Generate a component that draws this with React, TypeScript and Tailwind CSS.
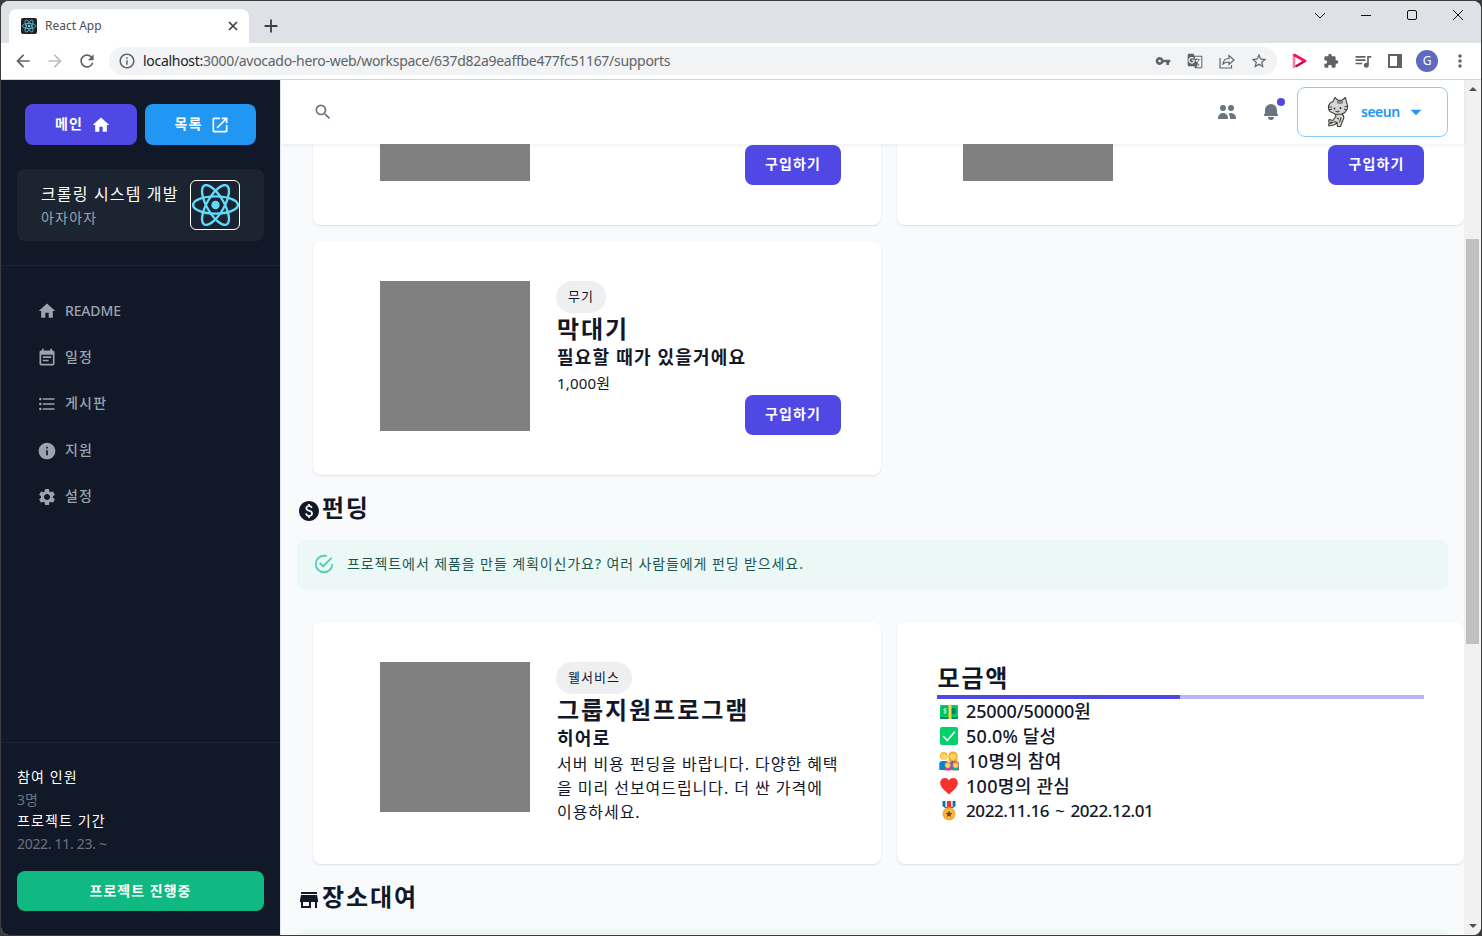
import React from "react";
import { MdHome, MdOpenInNew, MdEventNote, MdFormatListBulleted, MdInfo, MdSettings, MdSearch, MdArrowDropDown, MdPaid, MdStore, MdVpnKey, MdGTranslate, MdStarBorder, MdExtension, MdQueueMusic, MdArrowBack, MdArrowForward, MdRefresh, MdInfoOutline, MdAdd, MdMoreVert } from "react-icons/md";
import { HiUsers, HiBell } from "react-icons/hi";

function ReactLogo({ className }: { className: string }) {
  return (
    <svg viewBox="-11.5 -10.3 23 20.6" className={className}>
      <circle r="2.05" fill="#61dafb" />
      <g fill="none" stroke="#61dafb" strokeWidth="1.15">
        <ellipse rx="11" ry="4.2" />
        <ellipse rx="11" ry="4.2" transform="rotate(60)" />
        <ellipse rx="11" ry="4.2" transform="rotate(120)" />
      </g>
    </svg>
  );
}

function Cat() {
  return (
    <svg viewBox="0 0 22 32" className="h-8 w-[22px]" fill="none" stroke="#3f3f3a" strokeWidth="1.1" strokeLinejoin="round">
      <path d="M8 18 L3 15.500 Q1 13 1.500 10 Q2.500 6.500 6 5.500 L8 1.500 L11 4.300 L15 4.300 L18.500 1.500 L19.500 6.500 Q21.500 10 20 13.500 Q18.500 17 15 18 Q18 20.500 16 24 L13.500 30.500 L10.500 30.500 L10 27 L7 29 L2 30 L1.500 28 L6 26.500 L1.500 26 L2 23.500 L6 24.500 L9 20Z" fill="#d6d6d6" />
      <path d="M11 4.500v3M13 4.500v3.500M15 5v2.500M1.500 11h3.500M2 14l3-1M20.500 10.500h-3M20 14l-3-1M8.500 15l2 1 2-1M8 18.500l8-.5M10 22l2 1M7 25.500l4 1.500M14 21.500l-1.500 5" />
      <path d="M7.500 11.500v2M13.500 11v2" strokeWidth="1.600" />
    </svg>
  );
}

function Emoji({ kind }: { kind: string }) {
  return (
    <svg viewBox="0 0 20 20" className="h-5 w-5 shrink-0 overflow-visible">
      {kind === "money" && (
        <g>
          <rect x="1" y="13" width="18" height="5" rx="1" fill="#008463" />
          <rect x="1" y="4" width="18" height="12" rx="1" fill="#00d26a" />
          <rect x="2.500" y="5.500" width="15" height="9" fill="#00a56a" opacity=".5" />
          <circle cx="14" cy="10" r="3" fill="#008463" />
          <path d="M7.500 8H5V10H7V12H4.500M6 7v6" stroke="#a6f5cb" strokeWidth=".9" fill="none" />
          <rect x="9.500" y="4" width="3" height="14" fill="#fcd53f" />
        </g>
      )}
      {kind === "check" && (
        <g>
          <rect x="1" y="1" width="18" height="18" rx="2" fill="#00d26a" />
          <path d="M4.500 10.500L8.300 14.500L15.500 6" fill="none" stroke="#fff" strokeWidth="1.600" strokeLinecap="round" />
        </g>
      )}
      {kind === "family" && (
        <g>
          <path d="M.3 19v-6q0-3 3-3h4q2 0 2 3v6z" fill="#0084ce" />
          <path d="M10 19v-6q0-3 3-3h3q4 0 4 3v6z" fill="#8b5cc0" />
          <path d="M9.500 10V5q0-4.500 4.500-4.500T18.500 5v5z" fill="#f3ad35" />
          <circle cx="4.800" cy="5" r="4" fill="#f9b93c" />
          <circle cx="4.800" cy="6" r="3" fill="#ffd766" />
          <circle cx="14" cy="5.800" r="3" fill="#ffd766" />
          <path d="M5.500 19.500q0-3 3.200-3t3.200 3z" fill="#e0407f" />
          <path d="M13.500 19.500q0-3 3.200-3t3.300 3z" fill="#1bb060" />
          <circle cx="8.700" cy="14" r="3" fill="#f3a52b" />
          <circle cx="16.700" cy="14" r="3" fill="#f3a52b" />
          <circle cx="8.700" cy="14.700" r="2.100" fill="#ffd766" />
          <circle cx="16.700" cy="14.700" r="2.100" fill="#ffd766" />
        </g>
      )}
      {kind === "heart" && <path d="M10 18.500C5 14 1.200 11 1.200 6.800 1.200 1.500 7.500.5 10 4.500 12.500.5 18.800 1.500 18.800 6.800 18.800 11 15 14 10 18.500Z" fill="#f8312f" />}
      {kind === "medal" && (
        <g>
          <path d="M3.500 0h13v5l-4 3H7.500L3.500 5z" fill="#0074ba" />
          <path d="M8 0h4v7H8z" fill="#f8312f" />
          <path d="M6.300 0h1.700v6H6.300zM12 0h1.700v6H12z" fill="#e6e6e6" />
          <circle cx="10" cy="12.800" r="6.500" fill="#f9a92b" />
          <circle cx="10" cy="12.800" r="4.800" fill="#fbb943" />
          <path d="M10 9.500l1 2.300 2.500.2-1.900 1.600.6 2.400-2.200-1.300L7.800 16l.6-2.400L6.500 12l2.500-.2z" fill="#6d4534" />
        </g>
      )}
    </svg>
  );
}

function BuyButton() {
  return <button className="flex h-10 w-24 items-center justify-center self-end rounded-lg bg-[#5048e5] pb-[3px] pl-px text-[14px] font-semibold tracking-[1.1px] text-white">구입하기</button>;
}

function Card({ children, className = "" }: { children?: React.ReactNode; className?: string }) {
  return <div className={"w-[567.5px] shrink-0 rounded-lg bg-white p-10 shadow-[0_1px_2px_rgba(100,116,139,0.2)] " + className}>{children}</div>;
}

function Picture() {
  return (
    <div className="flex w-[203px] shrink-0 justify-center">
      <div className="h-[150px] w-[150px] bg-[#808080]" />
    </div>
  );
}

function Chip({ children }: { children: React.ReactNode }) {
  return <span className="flex h-8 items-center self-start rounded-full bg-[#eeeff1] px-3 text-[13px] tracking-[1px]">{children}</span>;
}

function Alert({ children }: { children?: React.ReactNode }) {
  return (
    <div className="flex h-[50px] w-[1151px] shrink-0 items-center rounded-lg bg-[#ebf8f5] px-4 pb-[3px] text-[14px] tracking-[0.9px] text-[#1d5650]">
      <svg viewBox="0 0 24 24" className="mr-3 h-[22px] w-[22px]" fill="#52cdb6">
        <path d="M20,12A8,8 0 0,1 12,20A8,8 0 0,1 4,12A8,8 0 0,1 12,4C12.76,4 13.5,4.11 14.2,4.31L15.77,2.74C14.61,2.26 13.34,2 12,2A10,10 0 0,0 2,12A10,10 0 0,0 12,22A10,10 0 0,0 22,12M7.91,10.08L6.5,11.5L11,16L21,6L19.59,4.58L11,13.17L7.91,10.08Z" />
      </svg>
      {children}
    </div>
  );
}

function BrowserChrome() {
  return (
    <>
      <div className="flex h-[42px] shrink-0 items-start bg-[#dee1e6] pl-2">
        <div className="mt-2 flex h-[34px] w-[240px] items-center rounded-t-lg bg-white pr-2 pl-3">
          <div className="flex h-4 w-4 items-center justify-center rounded-xs bg-[#222]">
            <ReactLogo className="h-[14px] w-[14px]" />
          </div>
          <span className="ml-2 flex-1 text-[12px] text-[#4c5054]">React App</span>
          <svg viewBox="0 0 16 16" className="h-4 w-4" stroke="#3c4043" strokeWidth="1.700">
            <path d="M4 4l8 8M12 4l-8 8" />
          </svg>
        </div>
        <MdAdd className="mt-[14px] ml-[11px] h-[22px] w-[22px] text-[#3c4043]" />
        <svg viewBox="0 0 162 29" className="mr-[5px] ml-auto h-[29px] w-[162px]" fill="none" stroke="#111" strokeWidth="1">
          <path d="M1 12l5 5 5-5M47 14.500h10" />
          <rect x="93.500" y="9.500" width="9" height="9" rx="1.500" />
          <path d="M139 9l10 10M149 9l-10 10" />
        </svg>
      </div>
      <div className="flex h-[37px] shrink-0 items-center border-b border-[#d5d7da] bg-white text-[#5f6368]">
        <MdArrowBack className="ml-3 h-5 w-5" />
        <MdArrowForward className="ml-3 h-5 w-5 text-[#bbbdc0]" />
        <MdRefresh className="ml-3 h-5 w-5" />
        <div className="ml-3 flex h-7 w-[1168px] items-center rounded-full bg-[#f1f3f4] pr-[10px] pl-[9px]">
          <MdInfoOutline className="h-[18px] w-[18px]" />
          <span className="ml-[7px] flex-1 pb-0.5 text-[14px] tracking-[-0.29px]">
            <span className="text-[#202124]">localhost:</span>3000/avocado-hero-web/workspace/637d82a9eaffbe477fc51167/supports
          </span>
          <div className="flex items-center gap-4">
            <MdVpnKey className="h-4 w-4" />
            <MdGTranslate className="h-4 w-4" />
            <svg viewBox="0 0 16 16" className="h-4 w-4" fill="none" stroke="#5f6368" strokeWidth="1.200">
              <path d="M1 5v10h11.500v-3M4 11q.5-5.500 6-5.500V2.500l5 4.500-5 4.500V9q-4 0-6 2z" />
            </svg>
            <MdStarBorder className="-mx-px h-[18px] w-[18px]" />
          </div>
        </div>
        <svg viewBox="0 0 16 16" className="ml-[14px] h-4 w-4" fill="none" strokeWidth="2.600" strokeLinejoin="round" strokeLinecap="round">
          <path d="M3 14V2" stroke="#fa7ba5" />
          <path d="M14 8L5.500 13" stroke="#c8005c" />
          <path d="M3.500 2L14 8" stroke="#fb0f64" />
        </svg>
        <MdExtension className="ml-4 h-4 w-4" />
        <MdQueueMusic className="ml-[14px] h-5 w-5" />
        <div className="ml-[15px] h-[14px] w-[14px] border-2 border-r-[5px] border-[#5f6368]" />
        <div className="ml-[14px] flex h-[22px] w-[22px] items-center justify-center rounded-full bg-[#5c6bc0] text-[12px] text-white">G</div>
        <MdMoreVert className="ml-3 h-5 w-5" />
      </div>
    </>
  );
}

const nav = [
  { label: "README", Icon: MdHome, tracking: "pb-0.5 tracking-[-0.15px]" },
  { label: "일정", Icon: MdEventNote, tracking: "pb-[3px] tracking-[1.2px]" },
  { label: "게시판", Icon: MdFormatListBulleted, tracking: "pb-[3px] tracking-[1.2px]" },
  { label: "지원", Icon: MdInfo, tracking: "pb-[3px] tracking-[1.2px]" },
  { label: "설정", Icon: MdSettings, tracking: "pb-[3px] tracking-[1.2px]" },
];

function Sidebar() {
  return (
    <aside className="flex w-[279px] shrink-0 flex-col bg-[#111827]">
      <div className="flex gap-2 px-6 pt-6 text-[14px] font-semibold tracking-[1px] text-white">
        <div className="flex h-[41px] w-28 items-center justify-center gap-2 rounded-lg bg-[#5048e5] pl-1">
          <span className="pb-0.5">메인</span>
          <MdHome className="h-5 w-5" />
        </div>
        <div className="flex h-[41px] w-[111px] items-center justify-center gap-2 rounded-lg bg-[#2196f3] pl-1">
          <span className="pb-0.5">목록</span>
          <MdOpenInNew className="h-5 w-5" />
        </div>
      </div>
      <div className="mx-4 mt-6 flex h-[72px] items-center justify-between rounded-lg bg-[#1c2431] pr-6 pl-6">
        <div className="flex flex-col pt-0.5">
          <span className="h-6 text-[16px] leading-6 tracking-[1.15px] text-white">크롤링 시스템 개발</span>
          <span className="h-6 text-[14px] leading-6 tracking-[1.2px] text-[#9ca3af]">아자아자</span>
        </div>
        <div className="flex h-[50px] w-[50px] shrink-0 items-center justify-center rounded-md border border-white">
          <ReactLogo className="h-[42px] w-[47px]" />
        </div>
      </div>
      <div className="mt-6 h-px bg-[#1b2433]" />
      <nav className="mt-[22px] flex flex-1 flex-col px-9">
        {nav.map(({ label, Icon, tracking }) => (
          <div key={label} className="flex h-[46.5px] items-center gap-2 text-[14px] font-medium text-[#9ca3af]">
            <Icon className="h-5 w-5" />
            <span className={tracking}>{label}</span>
          </div>
        ))}
      </nav>
      <div className="flex h-[193px] flex-col border-t border-[#1b2433] px-4 pt-[23px] text-[14px] leading-[22px]">
        <span className="tracking-[1.1px] text-white">참여 인원</span>
        <span className="pt-px leading-[21px] text-[#6b7280]">3명</span>
        <span className="tracking-[1.1px] text-white">프로젝트 기간</span>
        <span className="pt-px leading-[21px] tracking-[-0.3px] text-[#6b7280]">2022. 11. 23. ~</span>
        <div className="mt-[17px] flex h-10 items-center justify-center rounded-lg bg-[#10b981] pb-px font-semibold tracking-[1px] text-white">프로젝트 진행중</div>
      </div>
    </aside>
  );
}

function Header() {
  return (
    <header className="z-10 flex h-16 shrink-0 items-center bg-white pr-4 pl-8 text-[#6b7280] shadow-[0_1px_4px_rgba(100,116,139,0.12)]">
      <MdSearch className="h-5 w-5" />
      <HiUsers className="ml-auto h-5 w-5" />
      <div className="relative mr-4 ml-6">
        <HiBell className="h-5 w-5" />
        <span className="absolute -top-1 -right-1 h-2 w-2 rounded-full bg-[#5048e5]" />
      </div>
      <div className="flex h-[50px] w-[151px] items-center rounded-lg border border-[#90caf9] pl-[29px] text-[14px] font-semibold text-[#2196f3]">
        <Cat />
        <span className="ml-3 pb-px tracking-[-0.5px]">seeun</span>
        <MdArrowDropDown className="ml-[3px] h-[26px] w-[26px]" />
      </div>
    </header>
  );
}

const stats = [
  { kind: "money", text: "25000/50000원", tracking: "tracking-[-0.15px]" },
  { kind: "check", text: "50.0% 달성", tracking: "tracking-[0.15px]" },
  { kind: "family", text: "10명의 참여", tracking: "pl-px tracking-[0.45px]" },
  { kind: "heart", text: "100명의 관심", tracking: "tracking-[0.3px]" },
  { kind: "medal", text: "2022.11.16 ~ 2022.12.01", tracking: "text-[17px] tracking-[-0.4px] [word-spacing:2px]" },
];

function Content() {
  return (
    <main className="flex min-h-0 flex-1 flex-col overflow-hidden pl-4 text-[#121828]">
      <div className="flex shrink-0 gap-4 pl-4">
        {[0, 1].map((i) => (
          <div key={i} className="flex h-[81px] w-[567.5px] shrink-0 justify-between rounded-b-lg bg-white px-10 shadow-[0_1px_2px_rgba(100,116,139,0.2)]">
            <div className="flex w-[203px] justify-center">
              <div className="h-[37px] w-[150px] bg-[#808080]" />
            </div>
            <div className="flex self-start pt-px">
              <BuyButton />
            </div>
          </div>
        ))}
      </div>
      <div className="mt-4 flex shrink-0 pl-4">
        <Card className="flex h-[234px]">
          <Picture />
          <div className="flex flex-1 flex-col">
            <Chip>무기</Chip>
            <h3 className="h-8 pl-px text-[24px] leading-8 font-semibold tracking-[1.9px]">막대기</h3>
            <p className="h-[26px] pl-px text-[18px] leading-[25px] font-semibold tracking-[1.2px]">필요할 때가 있을거에요</p>
            <p className="h-6 pl-px text-[15px] leading-6 tracking-[0.2px]">1,000원</p>
            <BuyButton />
          </div>
        </Card>
      </div>
      <h2 className="mt-4 flex h-[34px] shrink-0 items-center text-[24px] font-semibold tracking-[1.7px]">
        <MdPaid className="mt-[5px] h-6 w-6" />
        <span className="pb-px pl-px">펀딩</span>
      </h2>
      <div className="mt-[15px] flex shrink-0">
        <Alert>프로젝트에서 제품을 만들 계획이신가요? 여러 사람들에게 펀딩 받으세요.</Alert>
      </div>
      <div className="mt-8 flex shrink-0 gap-4 pl-4">
        <Card className="flex h-[242px]">
          <Picture />
          <div className="flex flex-1 flex-col">
            <Chip>웰서비스</Chip>
            <h3 className="h-8 pl-px text-[24px] leading-8 font-semibold tracking-[1.95px]">그룹지원프로그램</h3>
            <p className="h-[26px] pl-px text-[18px] leading-[25px] font-semibold tracking-[1.3px]">히어로</p>
            <p className="pl-px text-[16px] leading-6 tracking-[0.95px] whitespace-nowrap">
              서버 비용 펀딩을 바랍니다. 다양한 혜택
              <br />을 미리 선보여드립니다. 더 싼 가격에
              <br />
              이용하세요.
            </p>
          </div>
        </Card>
        <Card className="h-[242px]">
          <h3 className="h-[33px] pl-px text-[24px] leading-8 font-semibold tracking-[1.8px]">모금액</h3>
          <div className="flex h-1 bg-[#b9b6f4]">
            <div className="w-1/2 bg-[#5048e5]" />
          </div>
          {stats.map((s) => (
            <div key={s.kind} className="flex h-[24.9px] items-center gap-[7px] pl-[2.5px] text-[18px] font-medium">
              <Emoji kind={s.kind} />
              <span className={s.tracking}>{s.text}</span>
            </div>
          ))}
        </Card>
      </div>
      <h2 className="mt-4 flex h-[34px] shrink-0 items-center text-[24px] font-semibold tracking-[1.9px]">
        <MdStore className="mt-[5px] h-6 w-6" />
        <span className="pb-px pl-px">장소대여</span>
      </h2>
      <div className="mt-[15px] flex shrink-0">
        <Alert />
      </div>
    </main>
  );
}

export default function App() {
  return (
    <div className="flex h-[936px] w-[1482px] flex-col overflow-hidden bg-[#3c3c3c] p-px font-['Noto_Sans','Noto_Sans_CJK_KR',sans-serif]">
      <div className="flex min-h-0 flex-1 flex-col overflow-hidden rounded-lg bg-white">
        <BrowserChrome />
        <div className="flex min-h-0 flex-1">
          <Sidebar />
          <div className="flex min-w-0 flex-1 flex-col border-l border-[#e6e8f0] bg-[#f9fafc]">
            <Header />
            <Content />
          </div>
          <div className="flex w-[17px] shrink-0 flex-col items-center justify-between bg-[#f1f1f1] py-[7px]">
            <div className="border-x-4 border-b-4 border-x-transparent border-b-[#505050]" />
            <div className="mt-[148px] mb-auto h-[405px] w-[13px] bg-[#c1c1c1]" />
            <div className="border-x-4 border-t-4 border-x-transparent border-t-[#505050]" />
          </div>
        </div>
      </div>
    </div>
  );
}
